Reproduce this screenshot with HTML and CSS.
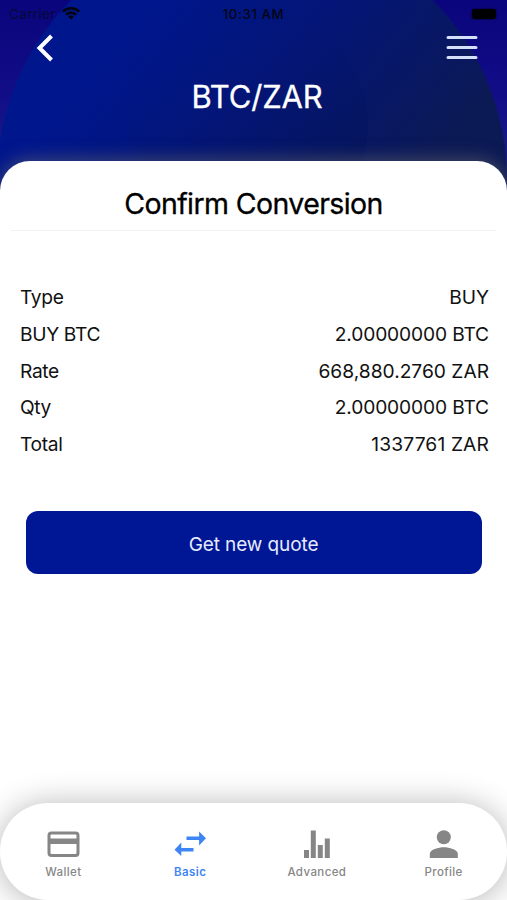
FILE: index.html
```html
<!DOCTYPE html>
<html lang="en">
<head>
<meta charset="utf-8">
<title>BTC/ZAR</title>
<link rel="stylesheet" href="styles.css">
</head>
<body>
<div class="app">
  <header class="hero">
    <svg class="hero-art" viewBox="0 0 507 220" aria-hidden="true">
      <defs>
        <linearGradient id="disc" gradientUnits="userSpaceOnUse" x1="140" y1="20" x2="380" y2="220">
          <stop offset="0" stop-color="#00168c"/>
          <stop offset=".5" stop-color="#041574"/>
          <stop offset="1" stop-color="#0b1955"/>
        </linearGradient>
        <linearGradient id="inner" gradientUnits="userSpaceOnUse" x1="210" y1="20" x2="310" y2="180">
          <stop offset="0" stop-color="#031682" stop-opacity="0"/>
          <stop offset="1" stop-color="#03135a" stop-opacity=".6"/>
        </linearGradient>
      </defs>
      <circle cx="252" cy="180" r="255" fill="url(#disc)"/>
      <circle cx="248" cy="125" r="120" fill="url(#inner)"/>
    </svg>
    <div class="status">
      <div class="carrier"><span class="carrier-name">Carrier</span>
        <svg class="wifi" viewBox="0 0 18 13"><path d="M9 0a12.7 12.7 0 0 1 9 3.7l-1.8 1.9A10.1 10.1 0 0 0 9 2.600 10.100 10.100 0 0 0 1.800 5.600L0 3.700A12.700 12.700 0 0 1 9 0ZM9 4.300a8.300 8.300 0 0 1 5.900 2.500l-1.900 1.900A5.700 5.700 0 0 0 9 7a5.700 5.700 0 0 0-4 1.700L3.100 6.800A8.300 8.300 0 0 1 9 4.300ZM9 8.500c1.100 0 2.100.4 2.800 1.200L9 12.600 6.200 9.700A3.900 3.900 0 0 1 9 8.500Z"/></svg>
      </div>
      <span class="clock">10:31 AM</span>
      <span class="battery"></span>
    </div>
    <div class="nav">
      <svg class="back" viewBox="0 0 18 28"><path d="M15.500 2 3.500 14l12 12" fill="none" stroke="#fff" stroke-width="4"/></svg>
      <svg class="menu" viewBox="0 0 32 26"><path d="M2 2.500h28M2 12.500h28M2 22.500h28" stroke="#d3e0fb" stroke-width="3" stroke-linecap="round"/></svg>
    </div>
    <h1 class="pair"><span>BTC/ZAR</span></h1>
  </header>
  <main class="sheet">
    <h2 class="title"><span>Confirm Conversion</span></h2>
    <dl class="details">
      <div class="row"><dt>Type</dt><dd>BUY</dd></div>
      <div class="row"><dt>BUY BTC</dt><dd class="amount">2.00000000 BTC</dd></div>
      <div class="row"><dt>Rate</dt><dd>668,880.2760 ZAR</dd></div>
      <div class="row"><dt>Qty</dt><dd class="amount">2.00000000 BTC</dd></div>
      <div class="row"><dt>Total</dt><dd class="total">1337761 ZAR</dd></div>
    </dl>
    <button class="quote">Get new quote</button>
  </main>
  <nav class="tabs">
    <a class="tab"><svg class="icon" viewBox="0 0 38 38"><rect x="5" y="8" width="29" height="22.500" rx="2.500" fill="none" stroke="currentColor" stroke-width="3"/><path d="M4.500 13.500h30v5.500h-30z" fill="currentColor"/></svg><span>Wallet</span></a>
    <a class="tab active"><svg class="icon" viewBox="0 0 38 38"><path d="M28.100 6.500v5H15.500V15h12.600v5.500L35 13.200zM10.300 17.500v5.500h12.200v3.500H10.300v4.500L3.500 24.700z" fill="currentColor"/></svg><span>Basic</span></a>
    <a class="tab"><svg class="icon" viewBox="0 0 38 38"><path d="M6 25h5v8H6zM12.800 5.500h5V33h-5zM19.800 20h5v13h-5zM26.800 13.500h5V33h-5z" fill="currentColor"/></svg><span>Advanced</span></a>
    <a class="tab"><svg class="icon" viewBox="0 0 38 38"><circle cx="18.800" cy="12.300" r="7" fill="currentColor"/><path d="M4.800 33v-4.300c0-4.200 8.700-6.400 14-6.400s14 2.200 14 6.400V33z" fill="currentColor"/></svg><span>Profile</span></a>
  </nav>
</div>
</body>
</html>
```

FILE: styles.css
```css
* { box-sizing: border-box; }
body { margin: 0; font-family: Inter, "Liberation Sans", sans-serif; }
.app {
  height: 900px;
  display: flex;
  flex-direction: column;
  overflow: hidden;
  background: #fff;
}
.hero {
  position: relative;
  height: 220px;
  margin-bottom: -59px;
  flex: none;
  color: #fff;
  background: linear-gradient(180deg, #0a057c, #120e88 45%, #202a80);
}
.hero-art { position: absolute; top: 0; left: 0; width: 507px; height: 220px; }
.status {
  position: relative;
  height: 28px;
  padding: 0 11px 0 9px;
  display: grid;
  grid-template-columns: 1fr auto 1fr;
  align-items: center;
  color: #030512;
  font-size: 13.5px;
}
.carrier { display: flex; align-items: center; gap: 6px; color: #05083a; }
.carrier-name { letter-spacing: .35px; }
.wifi { width: 18px; height: 13px; margin-top: -2px; fill: #02040f; }
.clock { padding-left: 2px; font-size: 13.2px; font-weight: 500; letter-spacing: .6px; }
.battery { justify-self: end; width: 24px; height: 10px; margin-top: -1px; border-radius: 3px; background: #000; box-shadow: 0 0 2px #000; }
.nav {
  position: relative;
  height: 40px;
  padding: 6px 29px 0 36px;
  display: flex;
  justify-content: space-between;
}
.back { width: 18px; height: 28px; }
.menu { width: 32px; height: 26px; margin-top: 1px; }
.pair {
  position: relative;
  margin: 0;
  height: 58px;
  padding-left: 7px;
  line-height: 58px;
  text-align: center;
  font-size: 31px;
  font-weight: 400;
  letter-spacing: -.15px;
  -webkit-text-stroke: .3px;
}
.sheet {
  position: relative;
  flex: 1;
  margin-bottom: -97px;
  padding: 0 11px;
  border-radius: 30px 30px 0 0;
  background: #fff;
  box-shadow: 0 -2px 18px rgba(105, 105, 105, .6);
}
.title {
  margin: 0;
  height: 70px;
  padding-top: 15px;
  line-height: 56px;
  text-align: center;
  font-size: 28.5px;
  font-weight: 400;
  letter-spacing: -.6px;
  -webkit-text-stroke: .3px;
  border-bottom: 1px solid #f1f1f1;
}
.details { margin: 48px 0 0; padding: 0 7px 0 9px; }
.row {
  height: 36.65px;
  display: flex;
  justify-content: space-between;
  align-items: center;
  font-size: 19.2px;
  color: #111;
}
.row dt { letter-spacing: -.35px; }
.row dd { margin: 0; }
.row .amount { letter-spacing: -.15px; }
.row .total { letter-spacing: .15px; }
.quote {
  display: block;
  width: 456px;
  height: 63px;
  margin: 49px auto 0;
  padding: 3px 0 0;
  border: 0;
  border-radius: 12px;
  background: #001795;
  color: #e6eaff;
  font: 400 19px Inter, sans-serif;
  letter-spacing: -.1px;
}
.tabs {
  position: relative;
  flex: none;
  height: 97px;
  padding-top: 22px;
  display: grid;
  grid-template-columns: repeat(4, 1fr);
  border-radius: 48px;
  background: #fff;
  box-shadow: 0 2px 32px rgba(0, 0, 0, .3);
}
.tab { display: flex; flex-direction: column; align-items: center; color: #868686; font-size: 11.5px; font-weight: 500; letter-spacing: .4px; }
.tab span { line-height: 16px; margin-top: 1px; }
.tab.active { color: #3f84f4; font-weight: 600; }
.icon { width: 38px; height: 38px; }
```
